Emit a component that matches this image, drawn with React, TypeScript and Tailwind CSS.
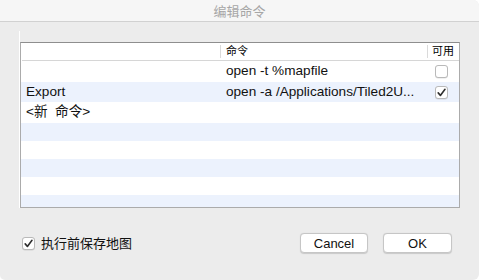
import React from "react";

const CJK = "font-['Helvetica_Neue','Liberation_Sans','Noto_Sans_CJK_SC',sans-serif]";

interface CommandRow {
  name: string;
  command: string;
  enabled: boolean | null;
}

const rows: CommandRow[] = [
  { name: "", command: "open -t %mapfile", enabled: false },
  { name: "Export", command: "open -a /Applications/Tiled2U...", enabled: true },
  { name: "<新  命令>", command: "", enabled: null },
];

const Check: React.FC<{ checked: boolean }> = ({ checked }) => (
  <div className="w-[13px] h-[13px] rounded-[3px] border border-[#b9b9b9] bg-white shadow-[0_0.5px_0.5px_rgba(0,0,0,0.12)] flex items-center justify-center">
    {checked && (
      <svg width="11" height="11" viewBox="0 0 11 11">
        <path d="M2.2 5.9 L4.4 8.4 L9 2.3" fill="none" stroke="#2f2f2f" strokeWidth="1.6" strokeLinecap="round" strokeLinejoin="round" />
      </svg>
    )}
  </div>
);

const App: React.FC = () => {
  return (
    <div className={`w-[479px] h-[280px] bg-white ${CJK}`}>
      <div className="w-full h-full bg-[#ececec] rounded-tr-[6px] rounded-br-[6px] rounded-bl-[5px] overflow-hidden flex flex-col">
        {/* title bar */}
        <div className="h-[22px] bg-[#f6f6f6] border-b border-[#d1d1d1] flex items-center justify-center shrink-0">
          <span className="text-[13px] text-[#a6a6a6] leading-none mt-[1px]">编辑命令</span>
        </div>

        {/* body */}
        <div className="pt-[9px] flex flex-col">
          <div className="ml-[19px] w-[441px] border-l border-white flex flex-col">
            <div className="h-[11px]" />
            <div className="w-[440px] h-[166px] border border-[#ababab] border-t-[#8e8e8e] bg-white overflow-hidden flex flex-col">
              {/* header */}
              <div className="h-[17px] flex shrink-0 bg-white text-[11px] text-black leading-none">
                <div className="w-[200px] flex items-center border-r border-[#dadada] my-[2px]" />
                <div className="w-[207px] flex items-center pl-[5px] border-r border-[#dadada] my-[2px]">命令</div>
                <div className="flex-1 flex items-center pl-[4px]">可用</div>
              </div>
              <div className="h-px bg-[#d6d6d6] ml-[1px] shrink-0" />

              {/* data rows */}
              {rows.map((r, i) => (
                <div
                  key={i}
                  className={`flex items-center shrink-0 text-[13.6px] text-[#111] ${i % 2 === 1 ? "bg-[#ecf2fd]" : "bg-white"} ${i === 1 ? "h-[20px]" : "h-[21px]"}`}
                >
                  <div className="w-[200px] pl-[5px] whitespace-pre">{r.name}</div>
                  <div className="w-[207px] pl-[5px] whitespace-nowrap overflow-hidden">{r.command}</div>
                  <div className="flex-1 pl-[7px]">
                    {r.enabled !== null && <Check checked={r.enabled} />}
                  </div>
                </div>
              ))}

              {/* filler rows */}
              {[0, 1, 2, 3, 4].map((i) => (
                <div key={i} className={`h-[18px] shrink-0 ${i % 2 === 0 ? "bg-[#ecf2fd]" : "bg-white"}`} />
              ))}
            </div>
          </div>

          {/* bottom row */}
          <div className="mt-[25px] h-[20px] flex items-center pl-[22px] pr-[27px]">
            <Check checked={true} />
            <span className="ml-[6px] text-[13px] text-[#111] leading-none">执行前保存地图</span>
            <div className="flex-1" />
            <button className="w-[68px] h-[20px] rounded-[4px] bg-white border border-[#c6c6c6] shadow-[0_0.5px_1px_rgba(0,0,0,0.15)] text-[13px] text-[#111] leading-none">
              Cancel
            </button>
            <button className="ml-[15px] w-[69px] h-[20px] rounded-[4px] bg-white border border-[#c6c6c6] shadow-[0_0.5px_1px_rgba(0,0,0,0.15)] text-[13px] text-[#111] leading-none">
              OK
            </button>
          </div>
        </div>
      </div>
    </div>
  );
};

export default App;
